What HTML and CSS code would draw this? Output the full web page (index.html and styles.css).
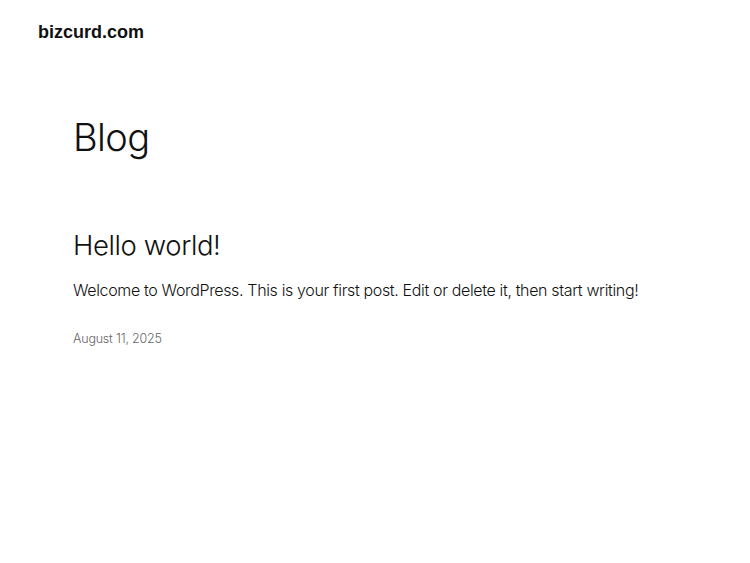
FILE: index.html
```html
<!DOCTYPE html>
<html lang="en">
<head>
<meta charset="utf-8">
<title>Blog – bizcurd.com</title>
<link rel="stylesheet" href="styles.css">
</head>
<body>
<header class="site-header">
  <a class="site-title" href="#">bizcurd.com</a>
</header>
<main class="main">
  <h1 class="page-title">Blog</h1>
  <article class="post">
    <h2 class="post-title">Hello world!</h2>
    <p class="post-excerpt">Welcome to WordPress. This is your first post. Edit or delete it, then start writing!</p>
    <div class="post-date">August 11, 2025</div>
  </article>
</main>
</body>
</html>
```
FILE: styles.css
```css
html, body {
  margin: 0;
  padding: 0;
  background: #ffffff;
  color: #111111;
}
body {
  font-family: Inter, "Noto Sans", sans-serif;
  width: 750px;
  height: 563px;
  overflow: hidden;
}
.site-header {
  padding: 21px 38px 0;
  height: 22px;
  display: flex;
  align-items: center;
}
.site-title {
  font-family: "Liberation Sans", Arial, sans-serif;
  font-weight: 700;
  font-size: 18px;
  color: #111111;
  text-decoration: none;
}
.main {
  padding: 0 73px;
  display: flex;
  flex-direction: column;
}
.page-title {
  margin: 72px 0 0;
  font-size: 38px;
  font-weight: 300;
  letter-spacing: -0.6px;
  line-height: 1.2;
}
.post {
  margin-top: 68px;
  display: flex;
  flex-direction: column;
}
.post-title {
  margin: 0;
  font-size: 27.5px;
  font-weight: 300;
  letter-spacing: -0.4px;
  line-height: 1.2;
}
.post-excerpt {
  margin: 16px 0 0;
  font-size: 16px;
  font-weight: 300;
  letter-spacing: -0.35px;
  line-height: 1.5;
  white-space: nowrap;
  color: #111111;
}
.post-date {
  margin-top: 29px;
  font-size: 12.5px;
  font-weight: 300;
  letter-spacing: -0.2px;
  color: #666666;
}
```
